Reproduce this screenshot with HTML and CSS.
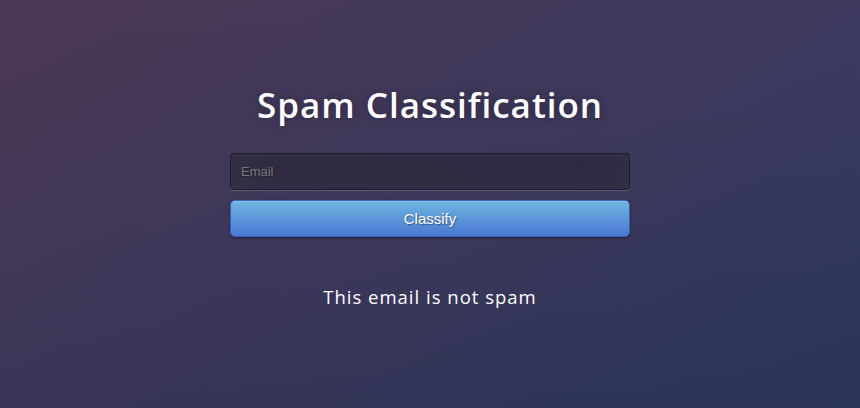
FILE: index.html
```html
<!DOCTYPE html>
<html>
<head>
<meta charset="utf-8">
<title>Spam Classification</title>
<link rel="stylesheet" href="styles.css">
</head>
<body>
<main class="page">
  <div class="login">
    <h1 class="title">Spam Classification</h1>
    <form class="form">
      <input class="field" type="text" name="email" placeholder="Email">
      <button class="btn" type="button">Classify</button>
    </form>
    <p class="result">This email is not spam</p>
  </div>
</main>
</body>
</html>
```
FILE: styles.css
```css
html, body {
  margin: 0;
  height: 100%;
}
body {
  font-family: "Open Sans", sans-serif;
  background-color: #3a3557;
  background-image:
    linear-gradient(to bottom, rgba(90,110,170,0.08), rgba(0,0,0,0)),
    linear-gradient(to bottom right, #4b3450 0%, #3a3557 50%, #2a3659 100%);
}
.page {
  height: 408px;
  display: flex;
  justify-content: center;
  padding-top: 84px;
  box-sizing: border-box;
}
.login {
  width: 400px;
  display: flex;
  flex-direction: column;
}
.title {
  margin: 0 0 27px;
  color: #fff;
  font-size: 35px;
  font-weight: 600;
  line-height: 42px;
  letter-spacing: 1px;
  text-align: center;
  text-shadow: 0 0 10px rgba(0,0,0,0.3);
}
.form {
  display: flex;
  flex-direction: column;
  gap: 10px;
}
.field {
  box-sizing: border-box;
  width: 100%;
  height: 37px;
  padding: 10px;
  font-family: "Liberation Sans", Arial, sans-serif;
  font-size: 13px;
  color: #fff;
  background: rgba(0,0,0,0.3);
  border: 1px solid rgba(0,0,0,0.3);
  border-radius: 4px;
  outline: none;
  text-shadow: 1px 1px 1px rgba(0,0,0,0.3);
  box-shadow: inset 0 -5px 45px rgba(100,100,100,0.2), 0 1px 1px rgba(255,255,255,0.2);
}
.field::placeholder {
  color: #777;
}
.btn {
  box-sizing: border-box;
  width: 100%;
  height: 37px;
  padding: 9px 14px;
  font-family: "Liberation Sans", Arial, sans-serif;
  font-size: 15px;
  color: #fff;
  text-shadow: 1px 1px 1px rgba(0,0,0,0.4);
  background-color: #4a77d4;
  background-image: linear-gradient(to bottom, #6eb6de, #4a77d4);
  border: 1px solid #3762bc;
  border-radius: 5px;
  box-shadow: inset 0 1px 0 rgba(255,255,255,0.2), 0 1px 2px rgba(0,0,0,0.5);
  cursor: pointer;
}
.result {
  margin: 47px 0 0;
  color: #fff;
  font-size: 18.5px;
  line-height: 25px;
  letter-spacing: 1px;
  text-align: center;
}
```
